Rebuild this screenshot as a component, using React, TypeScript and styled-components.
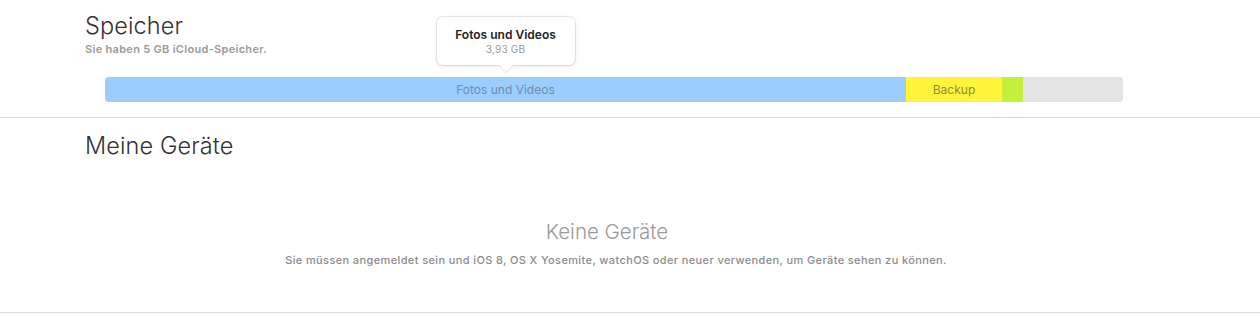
import styled, { createGlobalStyle } from "styled-components";

const GlobalStyle = createGlobalStyle`
    body {
        margin: 0;
        background: #ffffff;
        font-family: Inter, "Liberation Sans", sans-serif;
        -webkit-font-smoothing: antialiased;
    }
`;

type Segment = {
    label?: string
    size: number
    color: string
    textColor?: string
}

const segments: Segment[] = [
    { label: "Fotos und Videos", size: 801, color: "#9bcefe", textColor: "#6f8ca8" },
    { label: "Backup", size: 96, color: "#fff43a", textColor: "#8e8b3c" },
    { size: 21, color: "#c4ef3a" },
    { size: 100, color: "#e4e4e4" },
];

const total = segments.reduce((sum, s) => sum + s.size, 0);

const Page = styled.div`
    width: 1260px;
    height: 316px;
    display: flex;
    flex-direction: column;
`;

const StorageSection = styled.section`
    height: 118px;
    box-sizing: border-box;
    border-bottom: 1px solid #d6d6d6;
    padding: 12px 137px 0 85px;
`;

const Title = styled.h2`
    margin: 0;
    font-size: 23.5px;
    font-weight: 300;
    line-height: 28px;
    color: #333333;
    letter-spacing: 0.1px;
`;

const Subtitle = styled.p`
    margin: 2px 0 0;
    font-size: 11px;
    font-weight: 600;
    line-height: 14px;
    color: #9a9a9a;
    letter-spacing: 0.3px;
`;

const BarWrapper = styled.div`
    position: relative;
    margin: 21px 0 0 20px;
`;

const Bar = styled.div`
    display: flex;
    height: 25px;
    border-radius: 4px;
    overflow: hidden;
    box-shadow: inset 0 0 0 1px rgba(0, 0, 0, 0.06);
`;

const BarSegment = styled.div<{ $color: string; $textColor?: string }>`
    display: flex;
    align-items: center;
    justify-content: center;
    background-color: ${props => props.$color};
    color: ${props => props.$textColor ?? "transparent"};
    font-size: 12px;
    white-space: nowrap;
    overflow: hidden;
`;

const Tooltip = styled.div`
    position: absolute;
    bottom: 37px;
    transform: translateX(-50%);
    width: 138px;
    height: 48px;
    box-sizing: border-box;
    padding-top: 11px;
    background: #ffffff;
    border-radius: 6px;
    box-shadow: 0 0 0 1px rgba(0, 0, 0, 0.07), 0 1px 4px rgba(0, 0, 0, 0.12);
    text-align: center;

    &::after {
        content: "";
        position: absolute;
        left: 50%;
        bottom: -5px;
        width: 10px;
        height: 10px;
        background: #ffffff;
        transform: translateX(-50%) rotate(45deg);
        box-shadow: 1px 1px 1px rgba(0, 0, 0, 0.08);
    }
`;

const TooltipTitle = styled.div`
    font-size: 12px;
    font-weight: 600;
    line-height: 14px;
    color: #222222;
`;

const TooltipValue = styled.div`
    margin-top: 1px;
    font-size: 10px;
    line-height: 13px;
    color: #9a9a9a;
    letter-spacing: 0.2px;
`;

const DevicesSection = styled.section`
    height: 195px;
    box-sizing: border-box;
    border-bottom: 1px solid #dcdcdc;
    padding: 14px 113px 0 85px;
    display: flex;
    flex-direction: column;
`;

const Empty = styled.div`
    margin-top: 60px;
    display: flex;
    flex-direction: column;
    align-items: center;
    gap: 10px;
`;

const EmptyTitle = styled.div`
    margin-right: 18px;
    font-size: 20.5px;
    font-weight: 300;
    line-height: 24px;
    color: #999999;
`;

const EmptyText = styled.div`
    font-size: 11px;
    font-weight: 500;
    line-height: 12px;
    color: #8c8c8c;
    letter-spacing: 0.38px;
`;

const App = () => {
    const first = segments[0];
    const center = (first.size / 2 / total) * 100;

    return (
        <Page>
            <GlobalStyle />
            <StorageSection>
                <Title>Speicher</Title>
                <Subtitle>Sie haben 5 GB iCloud-Speicher.</Subtitle>
                <BarWrapper>
                    <Bar>
                        {segments.map((s, i) => (
                            <BarSegment
                                key={i}
                                $color={s.color}
                                $textColor={s.textColor}
                                style={{ width: `${(s.size / total) * 100}%` }}
                            >
                                {s.label}
                            </BarSegment>
                        ))}
                    </Bar>
                    <Tooltip style={{ left: `${center}%` }}>
                        <TooltipTitle>Fotos und Videos</TooltipTitle>
                        <TooltipValue>3,93 GB</TooltipValue>
                    </Tooltip>
                </BarWrapper>
            </StorageSection>
            <DevicesSection>
                <Title>Meine Geräte</Title>
                <Empty>
                    <EmptyTitle>Keine Geräte</EmptyTitle>
                    <EmptyText>
                        Sie müssen angemeldet sein und iOS 8, OS X Yosemite, watchOS oder neuer verwenden, um Geräte sehen zu können.
                    </EmptyText>
                </Empty>
            </DevicesSection>
        </Page>
    );
};

export default App;
